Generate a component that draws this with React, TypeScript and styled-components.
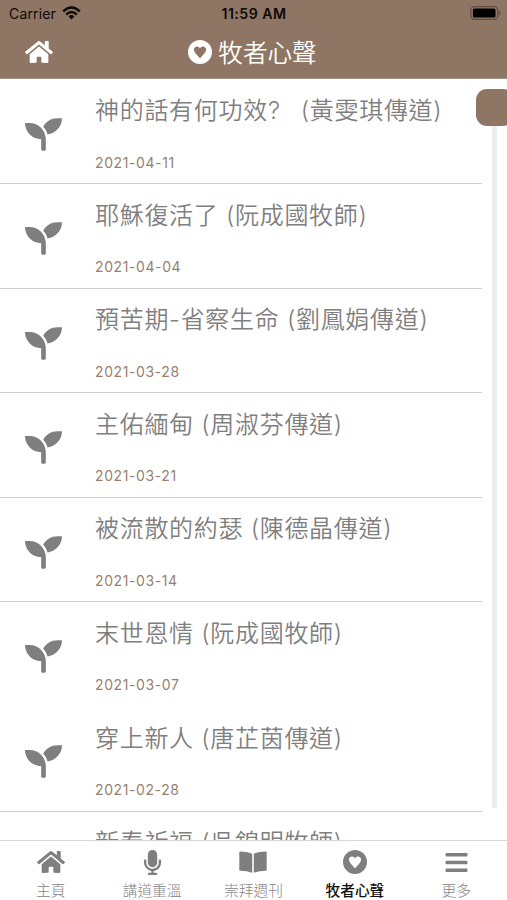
import React from 'react';
import styled, { createGlobalStyle } from 'styled-components';
import { FaHome, FaSeedling, FaMicrophone, FaBars } from 'react-icons/fa';

const BROWN = '#8f7563';
const GREY = '#7f7f7f';

const GlobalStyle = createGlobalStyle`
  * { box-sizing: border-box; }
  body { margin: 0; background: #fff; }
`;

const Screen = styled.div`
  width: 507px;
  height: 900px;
  display: flex;
  flex-direction: column;
  overflow: hidden;
  background: #fff;
  font-family: Inter, 'Noto Sans CJK TC', sans-serif;
`;

const Header = styled.header`
  flex: none;
  height: 79px;
  background: ${BROWN};
  border-bottom: 1px solid #a39284;
`;

const StatusBar = styled.div`
  height: 28px;
  display: grid;
  grid-template-columns: 1fr auto 1fr;
  align-items: center;
  padding: 0 6px 0 9px;
  font-size: 14px;
  line-height: 28px;
  color: #0c0908;
`;

const Carrier = styled.div`
  display: flex;
  align-items: center;
  gap: 6px;
  letter-spacing: 0.15px;
  svg { margin-top: -2px; }
`;

const Time = styled.div`
  margin-left: -2px;
  font-weight: 600;
  font-size: 14.1px;
  letter-spacing: 0.5px;
`;

const BatteryIcon = styled.svg`
  justify-self: end;
  display: block;
  margin-top: -2px;
`;

const NavBar = styled.div`
  height: 50px;
  display: grid;
  grid-template-columns: 1fr auto 1fr;
  align-items: center;
  padding: 0 25px;
  color: #fff;
  > svg { margin-top: -2px; }
`;

const NavTitle = styled.h1`
  margin: 0 0 0 -2px;
  display: flex;
  align-items: center;
  gap: 6px;
  font-size: 24.6px;
  line-height: 48px;
  font-weight: 350;
  svg { margin-top: -2px; }
`;

const Content = styled.main`
  flex: 1;
  min-height: 0;
  display: flex;
  overflow: hidden;
`;

const List = styled.div`
  width: 482px;
  padding-top: 0.5px;
`;

const Row = styled.article<{ $line: boolean }>`
  height: 104.6px;
  display: grid;
  grid-template-columns: 95px 1fr;
  border-bottom: 1px solid ${(p) => (p.$line ? '#d0d0d0' : 'transparent')};
`;

const Leaf = styled.div`
  padding: 36px 0 0 25px;
  color: ${GREY};
  svg { display: block; }
`;

const RowTitle = styled.h2`
  margin: 0;
  padding-top: 12.5px;
  font-size: 24px;
  line-height: 38px;
  font-weight: 350;
  letter-spacing: 0.7px;
  white-space: pre;
  color: ${GREY};
`;

const RowDate = styled.time`
  display: block;
  margin-top: 22.5px;
  font-size: 14px;
  line-height: 20px;
  letter-spacing: 0.6px;
  color: #987f6e;
`;

const Scroll = styled.div`
  position: relative;
  width: 5px;
  height: 729px;
  margin-left: 10px;
  background: linear-gradient(#fff 10px, #ededed 10px);
`;

const Thumb = styled.div`
  position: absolute;
  left: -16px;
  top: 10px;
  width: 38px;
  height: 37px;
  border-radius: 11px;
  background: ${BROWN};
`;

const TabBar = styled.nav`
  flex: none;
  height: 60px;
  display: grid;
  grid-template-columns: repeat(5, 1fr);
  border-top: 1px solid #d6d6d6;
  background: #fff;
`;

const Tab = styled.div<{ $active?: boolean }>`
  display: flex;
  flex-direction: column;
  align-items: center;
  font-size: 14.7px;
  line-height: 17px;
  font-weight: ${(p) => (p.$active ? 500 : 300)};
  color: ${(p) => (p.$active ? '#111' : '#858585')};
`;

const TabIcon = styled.div`
  height: 42px;
  display: flex;
  align-items: center;
  color: ${GREY};
  svg { display: block; }
`;

const rows = [
  { title: '神的話有何功效? \u2002(黃雯琪傳道)', date: '2021-04-11' },
  { title: '耶穌復活了 (阮成國牧師)', date: '2021-04-04' },
  { title: '預苦期-省察生命 (劉鳳娟傳道)', date: '2021-03-28' },
  { title: '主佑緬甸 (周淑芬傳道)', date: '2021-03-21' },
  { title: '被流散的約瑟 (陳德晶傳道)', date: '2021-03-14' },
  { title: '末世恩情 (阮成國牧師)', date: '2021-03-07', noLine: true },
  { title: '穿上新人 (唐芷茵傳道)', date: '2021-02-28' },
  { title: '新春祈福 (吳錦明牧師)' },
];

const Wifi = () => (
  <svg width="19" height="14" viewBox="0 0 19 14" fill="none" stroke="#0c0908" strokeWidth="2.5">
    <path d="M1.2 5.4Q9.5 -2.4 17.8 5.4" />
    <path d="M4.2 8.5Q9.5 3.6 14.8 8.5" />
    <path d="M6.6 10.4Q9.5 7.8 12.4 10.4L9.5 13.5Z" fill="#0c0908" stroke="none" />
  </svg>
);

const Battery = () => (
  <BatteryIcon width="31" height="14" viewBox="0 0 31 14">
    <rect x="0.9" y="0.7" width="27" height="12.6" rx="3.6" fill="none" stroke="#5f4e43" strokeWidth="1.2" />
    <rect x="2.9" y="2.5" width="22.6" height="9" rx="1.6" fill="#000" />
    <path d="M28.8 4.7q1.6 .6 1.6 2.3t-1.6 2.3z" fill="#5f4e43" />
  </BatteryIcon>
);

const HeartCircle = () => (
  <svg width="24" height="24" viewBox="0 0 24 24" fill="currentColor">
    <path
      fillRule="evenodd"
      d="M12 0a12 12 0 1 0 0 24a12 12 0 1 0 0-24ZM12 8.3C13 6.700 14.200 6.300 15.300 6.400C17.200 6.600 18.400 8.200 18.100 10.100C17.600 13 14.700 15.400 12.600 17.700Q12 18.300 11.400 17.700C9.300 15.400 6.400 13 5.900 10.100C5.600 8.200 6.800 6.600 8.700 6.400C9.800 6.300 11 6.700 12 8.300Z"
    />
  </svg>
);

const Book = () => (
  <svg width="28" height="22" viewBox="0 0 28 22" fill="currentColor">
    <path d="M0.300 1.300Q0.300 .5 1.100 .5Q8 .6 13.200 2.700V21.700Q8 19.900 1.100 19.700Q.3 19.700 .3 18.900Z" />
    <path d="M27.700 1.300Q27.700 .5 26.900 .5Q20 .6 14.800 2.700V21.700Q20 19.900 26.900 19.700Q27.700 19.700 27.700 18.900Z" />
  </svg>
);

export default function App() {
  return (
    <Screen>
      <GlobalStyle />
      <Header>
        <StatusBar>
          <Carrier>Carrier <Wifi /></Carrier>
          <Time>11:59 AM</Time>
          <Battery />
        </StatusBar>
        <NavBar>
          <FaHome size={28} />
          <NavTitle><HeartCircle />牧者心聲</NavTitle>
        </NavBar>
      </Header>
      <Content>
        <List>
          {rows.map((r) => (
            <Row key={r.title} $line={!r.noLine}>
              <Leaf><FaSeedling size={37} /></Leaf>
              <div>
                <RowTitle>{r.title}</RowTitle>
                {r.date && <RowDate>{r.date}</RowDate>}
              </div>
            </Row>
          ))}
        </List>
        <Scroll><Thumb /></Scroll>
      </Content>
      <TabBar>
        <Tab><TabIcon><FaHome size={28} /></TabIcon>主頁</Tab>
        <Tab><TabIcon><FaMicrophone size={25} /></TabIcon>講道重溫</Tab>
        <Tab><TabIcon><Book /></TabIcon>崇拜週刊</Tab>
        <Tab $active><TabIcon><HeartCircle /></TabIcon>牧者心聲</Tab>
        <Tab><TabIcon><FaBars size={25} /></TabIcon>更多</Tab>
      </TabBar>
    </Screen>
  );
}
